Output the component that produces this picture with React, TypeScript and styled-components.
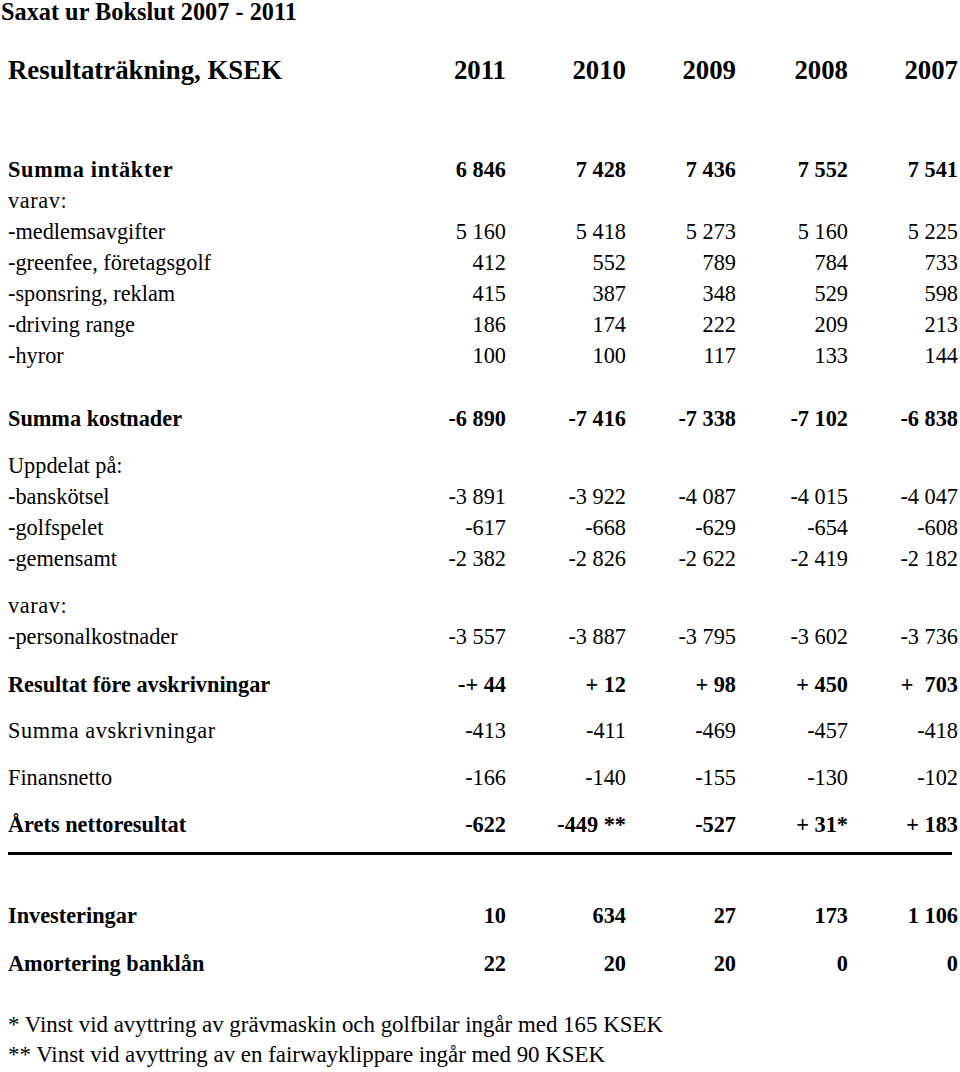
import React from "react";
import styled, { createGlobalStyle } from "styled-components";

const Global = createGlobalStyle`
  html, body { margin: 0; padding: 0; background: #fff; }
  body { font-family: "Liberation Serif", "Times New Roman", serif; color: #000; }
`;

const Page = styled.div`
  width: 960px;
  min-height: 1072px;
  box-sizing: border-box;
  padding: 0 2px 0 8px;
  display: flex;
  flex-direction: column;
`;

const Title = styled.h1`
  margin: 0 0 0 -7px;
  font-size: 24.3px;
  line-height: 24px;
  height: 24px;
  font-weight: bold;
  white-space: nowrap;
`;

const Row = styled.div<{ $mt?: number; $h?: number; $size?: number; $bold?: boolean }>`
  display: grid;
  grid-template-columns: 398px 100px 120px 110px 112px 110px;
  margin-top: ${(p) => p.$mt ?? 0}px;
  height: ${(p) => p.$h ?? 31}px;
  line-height: ${(p) => p.$h ?? 31}px;
  font-size: ${(p) => p.$size ?? 22.3}px;
  font-weight: ${(p) => (p.$bold ? "bold" : "normal")};
  white-space: nowrap;
`;

const Label = styled.div<{ $spacing?: number }>`
  letter-spacing: ${(p) => p.$spacing ?? 0}px;
`;

const Num = styled.div`
  text-align: right;
  white-space: pre;
`;

const Rule = styled.div`
  margin-top: 12px;
  width: 944px;
  height: 3px;
  background: #000;
`;

const Note = styled.div<{ $mt?: number }>`
  margin-top: ${(p) => p.$mt ?? 0}px;
  font-size: 22.9px;
  line-height: 30px;
  white-space: nowrap;
`;

type R = {
  label: string;
  vals?: string[];
  bold?: boolean;
  mt?: number;
  spacing?: number;
};

const rows: R[] = [
  { label: "Summa intäkter", vals: ["6 846", "7 428", "7 436", "7 552", "7 541"], bold: true, mt: 68, spacing: 0.7 },
  { label: "varav:", spacing: 0.6 },
  { label: "-medlemsavgifter", vals: ["5 160", "5 418", "5 273", "5 160", "5 225"] },
  { label: "-greenfee, företagsgolf", vals: ["412", "552", "789", "784", "733"] },
  { label: "-sponsring, reklam", vals: ["415", "387", "348", "529", "598"] },
  { label: "-driving range", vals: ["186", "174", "222", "209", "213"] },
  { label: "-hyror", vals: ["100", "100", "117", "133", "144"] },
  { label: "Summa kostnader", vals: ["-6 890", "-7 416", "-7 338", "-7 102", "-6 838"], bold: true, mt: 32 },
  { label: "Uppdelat på:", mt: 16 },
  { label: "-banskötsel", vals: ["-3 891", "-3 922", "-4 087", "-4 015", "-4 047"] },
  { label: "-golfspelet", vals: ["-617", "-668", "-629", "-654", "-608"] },
  { label: "-gemensamt", vals: ["-2 382", "-2 826", "-2 622", "-2 419", "-2 182"] },
  { label: "varav:", spacing: 0.6, mt: 16 },
  { label: "-personalkostnader", vals: ["-3 557", "-3 887", "-3 795", "-3 602", "-3 736"] },
  { label: "Resultat före avskrivningar", vals: ["-+ 44", "+ 12", "+ 98", "+ 450", "+  703"], bold: true, mt: 17 },
  { label: "Summa avskrivningar", vals: ["-413", "-411", "-469", "-457", "-418"], spacing: 0.6, mt: 15 },
  { label: "Finansnetto", vals: ["-166", "-140", "-155", "-130", "-102"], mt: 16 },
  { label: "Årets nettoresultat", vals: ["-622", "-449 **", "-527", "+ 31*", "+ 183"], bold: true, mt: 16 },
];

const rows2: R[] = [
  { label: "Investeringar", vals: ["10", "634", "27", "173", "1 106"], bold: true, mt: 45 },
  { label: "Amortering banklån", vals: ["22", "20", "20", "0", "0"], bold: true, mt: 17 },
];

const renderRow = (r: R, i: number) => (
  <Row key={i} $mt={r.mt} $bold={r.bold}>
    <Label $spacing={r.spacing}>{r.label}</Label>
    {(r.vals ?? ["", "", "", "", ""]).map((v, j) => (
      <Num key={j}>{v}</Num>
    ))}
  </Row>
);

export default function App() {
  return (
    <>
      <Global />
      <Page>
        <Title>Saxat ur Bokslut 2007 - 2011</Title>
        <Row $mt={31} $h={31} $size={26.8} $bold>
          <Label>Resultaträkning, KSEK</Label>
          <Num>2011</Num>
          <Num>2010</Num>
          <Num>2009</Num>
          <Num>2008</Num>
          <Num>2007</Num>
        </Row>
        {rows.map(renderRow)}
        <Rule />
        {rows2.map(renderRow)}
        <Note $mt={31}>* Vinst vid avyttring av grävmaskin och golfbilar ingår med 165 KSEK</Note>
        <Note>** Vinst vid avyttring av en fairwayklippare ingår med 90 KSEK</Note>
      </Page>
    </>
  );
}
